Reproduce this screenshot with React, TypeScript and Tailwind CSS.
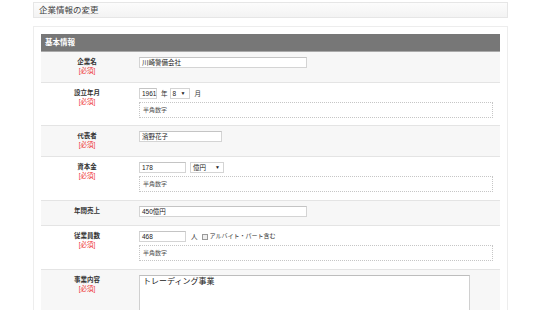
import React from "react";

type RowProps = {
  label: string;
  required?: boolean;
  gray?: boolean;
  height: string;
  children: React.ReactNode;
};

function Row({ label, required, gray, height, children }: RowProps) {
  return (
    <div
      className={`flex border-b border-[#e4e4e4] ${height} ${
        gray ? "bg-[#f7f7f7]" : "bg-white"
      }`}
    >
      <div className="w-[92px] shrink-0 flex flex-col items-center pt-[5px] text-[6.5px] leading-[9px]">
        <span className="font-bold text-[#333]">{label}</span>
        {required && <span className="text-[#ee3030]">[必須]</span>}
      </div>
      <div className="flex-1 flex flex-col pl-[6px] pr-[7px] pt-[5px]">{children}</div>
    </div>
  );
}

function TextBox({ value, width }: { value: string; width: string }) {
  return (
    <div
      className={`${width} h-[11px] border border-[#d4d4d4] border-t-[#c4c4c4] bg-white px-[2px] text-[6.5px] leading-[9px] text-[#222]`}
    >
      {value}
    </div>
  );
}

function SelectBox({ value, width }: { value: string; width: string }) {
  return (
    <div
      className={`${width} h-[11px] border border-[#d4d4d4] bg-white px-[2px] flex items-center justify-between text-[6.5px] leading-[9px] text-[#222]`}
    >
      <span>{value}</span>
      <span className="text-[5px] mr-[1px]">▼</span>
    </div>
  );
}

function Hint() {
  return (
    <div className="mt-[3px] h-[16px] border border-dotted border-[#c6c6c6] pl-[3px] flex items-center text-[6px] text-[#555]">
      半角数字
    </div>
  );
}

export default function App() {
  return (
    <div className="w-[550px] h-[310px] overflow-hidden bg-white font-['Liberation_Sans','Noto_Sans_CJK_JP',sans-serif] text-[#333]">
      <div className="ml-[33px] w-[475px] pt-[2px]">
        <div className="h-[16px] border border-[#e6e6e6] bg-gradient-to-b from-[#fcfcfc] to-[#f3f3f3] pl-[5px] flex items-center text-[8.5px] text-[#444]">
          企業情報の変更
        </div>

        <div className="mt-[8px] border border-[#ededed] bg-white px-[7px] pt-[7px]">
          <div className="h-[18px] bg-[#777777] pl-[4px] flex items-center text-[7.5px] font-bold text-white border-b border-[#aaa]">
            基本情報
          </div>

          <Row label="企業名" required gray height="h-[31px]">
            <TextBox value="川崎警備会社" width="w-[168px]" />
          </Row>

          <Row label="設立年月" required height="h-[43px]">
            <div className="flex items-center text-[6.5px]">
              <TextBox value="1961" width="w-[18px]" />
              <span className="ml-[4px] mr-[2px]">年</span>
              <SelectBox value="8" width="w-[20px]" />
              <span className="ml-[5px]">月</span>
            </div>
            <Hint />
          </Row>

          <Row label="代表者" required gray height="h-[31px]">
            <TextBox value="濱野花子" width="w-[83px]" />
          </Row>

          <Row label="資本金" required height="h-[44px]">
            <div className="flex items-center">
              <TextBox value="178" width="w-[47px]" />
              <div className="ml-[4px]">
                <SelectBox value="億円" width="w-[34px]" />
              </div>
            </div>
            <Hint />
          </Row>

          <Row label="年間売上" gray height="h-[25px]">
            <TextBox value="450億円" width="w-[168px]" />
          </Row>

          <Row label="従業員数" required height="h-[44px]">
            <div className="flex items-center text-[6.5px]">
              <TextBox value="468" width="w-[47px]" />
              <span className="ml-[5px]">人</span>
              <span className="ml-[4px] w-[6px] h-[6px] border border-[#999] bg-[#eee]" />
              <span className="ml-[2px] text-[6px]">アルバイト・パート含む</span>
            </div>
            <Hint />
          </Row>

          <Row label="事業内容" required gray height="h-[60px]">
            <div className="w-[331px] h-[60px] border border-[#d0d0d0] border-t-[#bdbdbd] bg-white px-[3px] pt-[1px] text-[8px] leading-[10px] text-[#222]">
              トレーディング事業
            </div>
          </Row>
        </div>
      </div>
    </div>
  );
}
